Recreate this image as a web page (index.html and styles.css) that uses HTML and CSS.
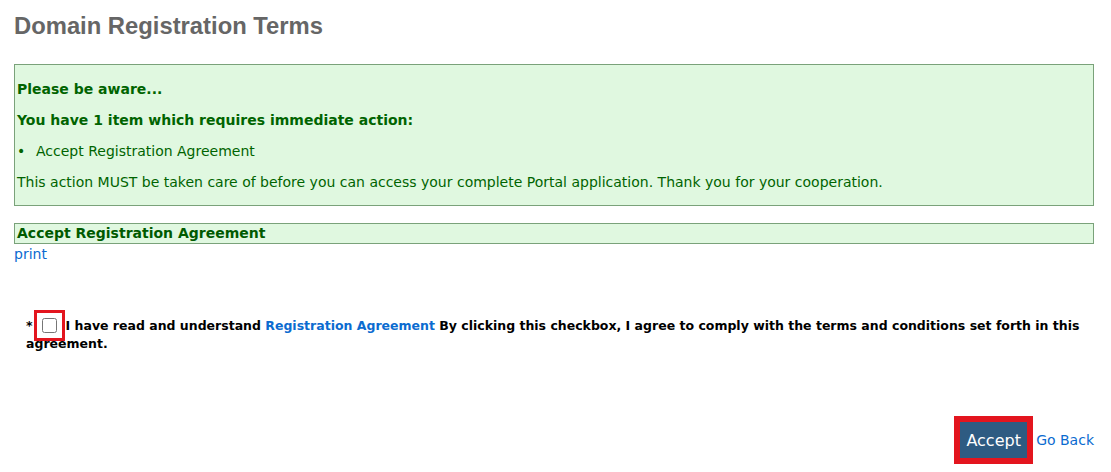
FILE: index.html
```html
<!DOCTYPE html>
<html>
<head>
<meta charset="utf-8">
<link rel="stylesheet" href="styles.css">
</head>
<body>
<div class="page">
  <h1 class="title">Domain Registration Terms</h1>
  <div class="notice">
    <p class="notice-strong">Please be aware...</p>
    <p class="notice-strong">You have 1 item which requires immediate action:</p>
    <ul class="notice-list"><li><span class="bullet">•</span>Accept Registration Agreement</li></ul>
    <p class="notice-text">This action MUST be taken care of before you can access your complete Portal application. Thank you for your cooperation.</p>
  </div>
  <div class="section-head">Accept Registration Agreement</div>
  <a class="link print" href="#">print</a>
  <div class="agree">
    <span class="req">*</span><input type="checkbox" class="cb">I have read and understand <a class="link" href="#">Registration Agreement</a> By clicking this checkbox, I agree to comply with the terms and conditions set forth in this agreement.
  </div>
  <div class="actions">
    <span class="btn-wrap"><button class="btn">Accept</button></span>
    <a class="link back" href="#">Go Back</a>
  </div>
</div>
</body>
</html>
```
FILE: styles.css
```css
html, body { margin: 0; padding: 0; background: #fff; }
.page {
  padding: 12px 17px 0 14px;
  font-family: "DejaVu Sans", Verdana, sans-serif;
  font-size: 14px;
  color: #006400;
}
.title {
  margin: 0 0 24px 0;
  font-family: "Liberation Sans", Arial, sans-serif;
  font-size: 23.8px;
  font-weight: bold;
  color: #666666;
  line-height: 28px;
}
.notice {
  border: 1px solid #7aa27a;
  background: #e0f8e0;
  padding: 9px 2px 7px 2px;
}
.notice p { margin: 0; }
.notice-strong { font-weight: bold; line-height: 31px; }
.notice-list { margin: 0; padding: 0; list-style: none; line-height: 31px; }
.bullet { display: inline-block; width: 19px; }
.notice-text { line-height: 31px; }
.section-head {
  margin-top: 17px;
  border: 1px solid #7aa27a;
  background: #e0f8e0;
  padding: 0 2px;
  font-weight: bold;
  line-height: 19px;
  color: #005a00;
}
.link { color: #0b6bd0; text-decoration: none; }
.print { display: block; line-height: 20px; }
.agree {
  margin-top: 53px;
  padding-left: 12px;
  font-weight: bold;
  font-size: 12.5px;
  color: #000;
  line-height: 18px;
}
.cb {
  width: 15px;
  height: 15px;
  margin: 0 9px 0 9px;
  vertical-align: -3px;
  outline: 3px solid #e3151e;
  outline-offset: 5px;
}
.actions {
  margin-top: 63px;
  display: flex;
  justify-content: flex-end;
  align-items: center;
  gap: 3px;
}
.btn-wrap {
  display: inline-flex;
  border: 6px solid #e3151e;
}
.btn {
  background: #2e5b82;
  color: #fff;
  border: 0;
  font-family: "DejaVu Sans", Verdana, sans-serif;
  font-size: 16px;
  padding: 0;
  height: 36px;
  width: 67px;
}
.back { font-size: 14px; }
```
